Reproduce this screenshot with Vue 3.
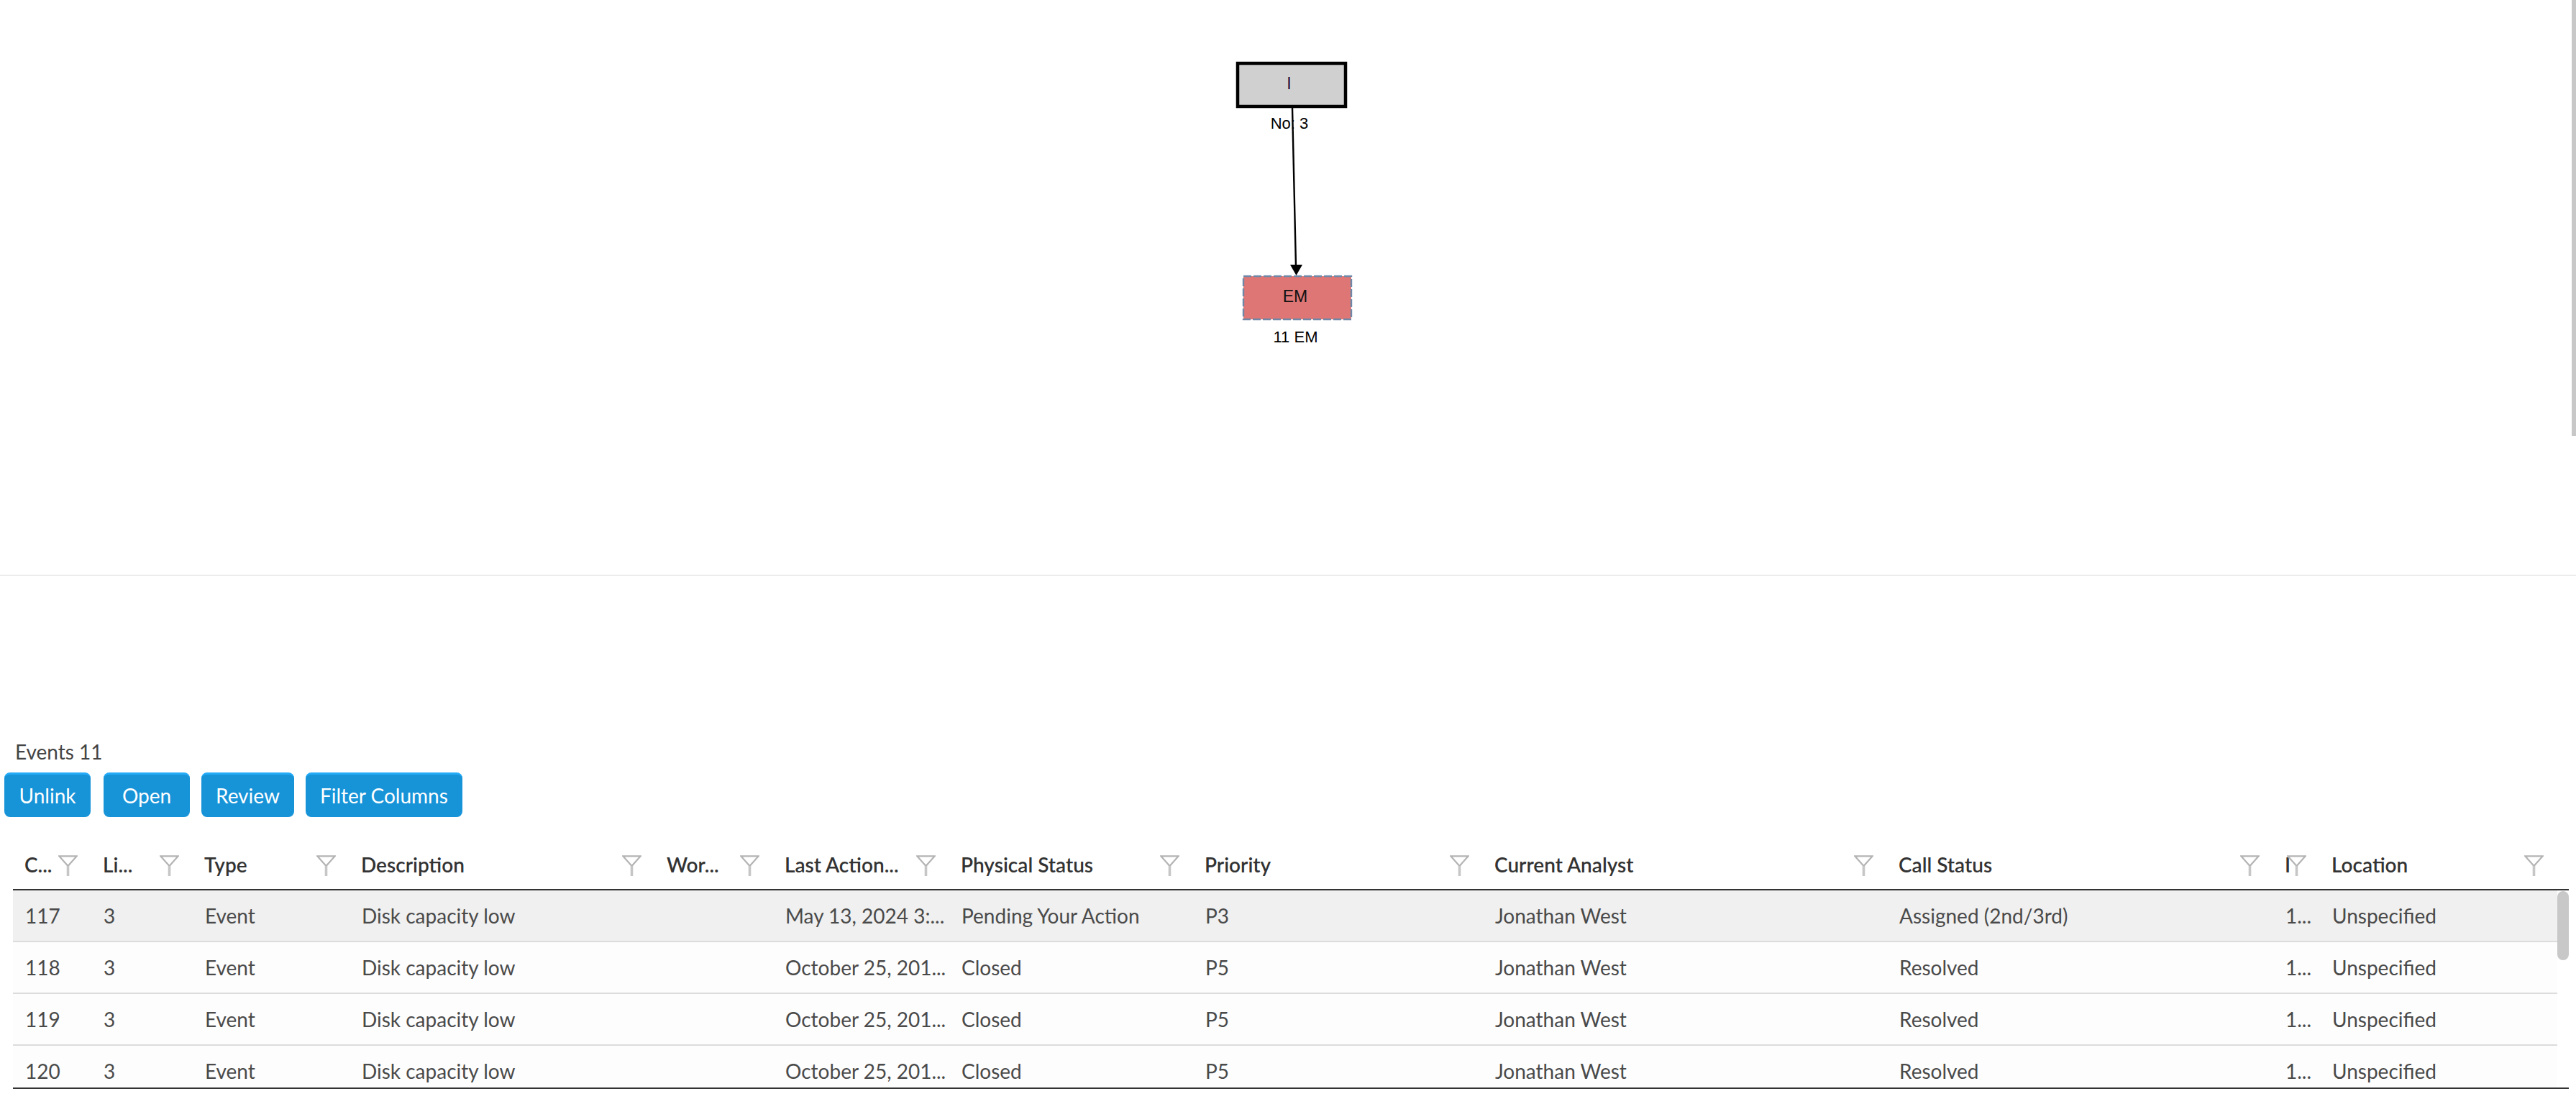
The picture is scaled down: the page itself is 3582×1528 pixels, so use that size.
<script setup>
const buttons = ['Unlink', 'Open', 'Review', 'Filter Columns']

const columns = ['C...', 'Li...', 'Type', 'Description', 'Wor...', 'Last Action...', 'Physical Status', 'Priority', 'Current Analyst', 'Call Status', 'I', 'Location']

const oldRow = ['3', 'Event', 'Disk capacity low', '', 'October 25, 201...', 'Closed', 'P5', 'Jonathan West', 'Resolved', '1...', 'Unspecified']

const rows = [
  { selected: true, cells: ['117', '3', 'Event', 'Disk capacity low', '', 'May 13, 2024 3:...', 'Pending Your Action', 'P3', 'Jonathan West', 'Assigned (2nd/3rd)', '1...', 'Unspecified'] },
  { selected: false, cells: ['118', ...oldRow] },
  { selected: false, cells: ['119', ...oldRow] },
  { selected: false, cells: ['120', ...oldRow] }
]
</script>

<template>
  <div class="page">
    <section class="graph">
      <svg class="graph-svg" width="3582" height="799" viewBox="0 0 3582 799">
        <rect x="1721" y="88" width="150" height="60" fill="#d0d0d0" stroke="#000" stroke-width="4.5" />
        <text x="1792.5" y="124" class="node-text" fill="#2a0f3a">I</text>
        <text x="1793" y="179" class="node-label">No: 3</text>

        <line x1="1797" y1="150" x2="1802" y2="370" stroke="#000" stroke-width="2.4" />
        <path d="M1794 368 H1811 L1802.5 383 Z" fill="#000" />

        <rect x="1729" y="384" width="150" height="60" fill="#dd7674" stroke="#6f88a8" stroke-width="2.4" stroke-dasharray="11 3" />
        <text x="1801" y="420" class="node-text" fill="#111">EM</text>
        <text x="1801.5" y="476" class="node-label">11 EM</text>
      </svg>
      <div class="page-scroll"></div>
    </section>

    <section class="events">
      <div class="events-title">Events 11</div>
      <div class="toolbar">
        <button v-for="b in buttons" :key="b" class="btn">{{ b }}</button>
      </div>

      <div class="grid">
        <div class="head-row">
          <div v-for="c in columns" :key="c" class="head-cell">
            <span class="head-label">{{ c }}</span>
            <svg class="funnel" width="27" height="29" viewBox="0 0 27 29">
              <path d="M1.2 1.3 H25.8 L13.5 15 Z" fill="none" stroke="#b4b4b4" stroke-width="2.2" />
              <line x1="13.5" y1="15" x2="13.5" y2="29" stroke="#c6c6c6" stroke-width="3.6" />
            </svg>
          </div>
        </div>

        <div class="body">
          <div v-for="r in rows" :key="r.cells[0]" class="row" :class="{ selected: r.selected }">
            <div v-for="(v, i) in r.cells" :key="i" class="cell">{{ v }}</div>
          </div>
          <div class="thumb"></div>
        </div>
      </div>
    </section>
  </div>
</template>

<style scoped>
.page {
  position: relative;
  width: 3582px;
  height: 1528px;
  overflow: hidden;
  background: #fff;
  font-family: Lato, "Open Sans", sans-serif;
  color: #333;
}

.graph {
  position: relative;
  height: 799px;
  border-bottom: 2px solid #ececec;
}
.graph-svg { display: block; }
.node-text { font-family: "Liberation Sans", Arial, sans-serif; font-size: 23px; text-anchor: middle; }
.node-label { font-family: "Liberation Sans", Arial, sans-serif; font-size: 22px; text-anchor: middle; fill: #000; }
.page-scroll {
  position: absolute;
  top: 0;
  right: 0;
  width: 6px;
  height: 606px;
  background: #c8c8c8;
}

.events { padding: 227px 0 0 6px; }
.events-title {
  margin-left: 15px;
  height: 34px;
  line-height: 34px;
  font-size: 28px;
  color: #444;
}
.toolbar {
  display: flex;
  gap: 16px;
  margin-top: 12px;
}
.toolbar .btn:first-child { margin-right: 2px; }
.btn {
  min-width: 120px;
  height: 62px;
  padding: 0 20px 2px;
  border: none;
  border-top: 3px solid #25abf8;
  border-radius: 8px;
  background: #1793d8;
  color: #fff;
  font-family: inherit;
  font-size: 28px;
  font-weight: 400;
}

.grid {
  margin: 39px 0 0 12px;
  width: 3554px;
}
.head-row, .row {
  display: grid;
  grid-template-columns: 109px 141px 218px 425px 164px 245px 339px 403px 562px 537px 65px 330px;
}
.head-row {
  height: 61px;
  border-bottom: 2px solid #333;
}
.head-cell {
  display: flex;
  align-items: center;
  justify-content: space-between;
  min-width: 0;
  padding: 0 19px 0 16px;
}
.head-label {
  min-width: 0;
  flex: 1;
  padding-bottom: 7px;
  white-space: nowrap;
  font-size: 28px;
  font-weight: 600;
  color: #333;
}
.funnel { flex: none; margin-top: -5px; }

.body {
  position: relative;
  height: 274px;
  overflow: hidden;
  border-bottom: 2px solid #333;
}
.row {
  width: 3538px;
  height: 72px;
  border-bottom: 2px solid #dcdcdc;
  box-sizing: border-box;
  background: #fdfdfd;
}
.row.selected { background: #f0f0f0; }
.cell {
  display: flex;
  align-items: center;
  min-width: 0;
  padding-left: 17px;
  white-space: nowrap;
  font-size: 28px;
  color: #4a4a4a;
}
.thumb {
  position: absolute;
  top: 1px;
  right: 0;
  width: 16px;
  height: 96px;
  border-radius: 8px;
  background: #c8c8c8;
}
</style>
